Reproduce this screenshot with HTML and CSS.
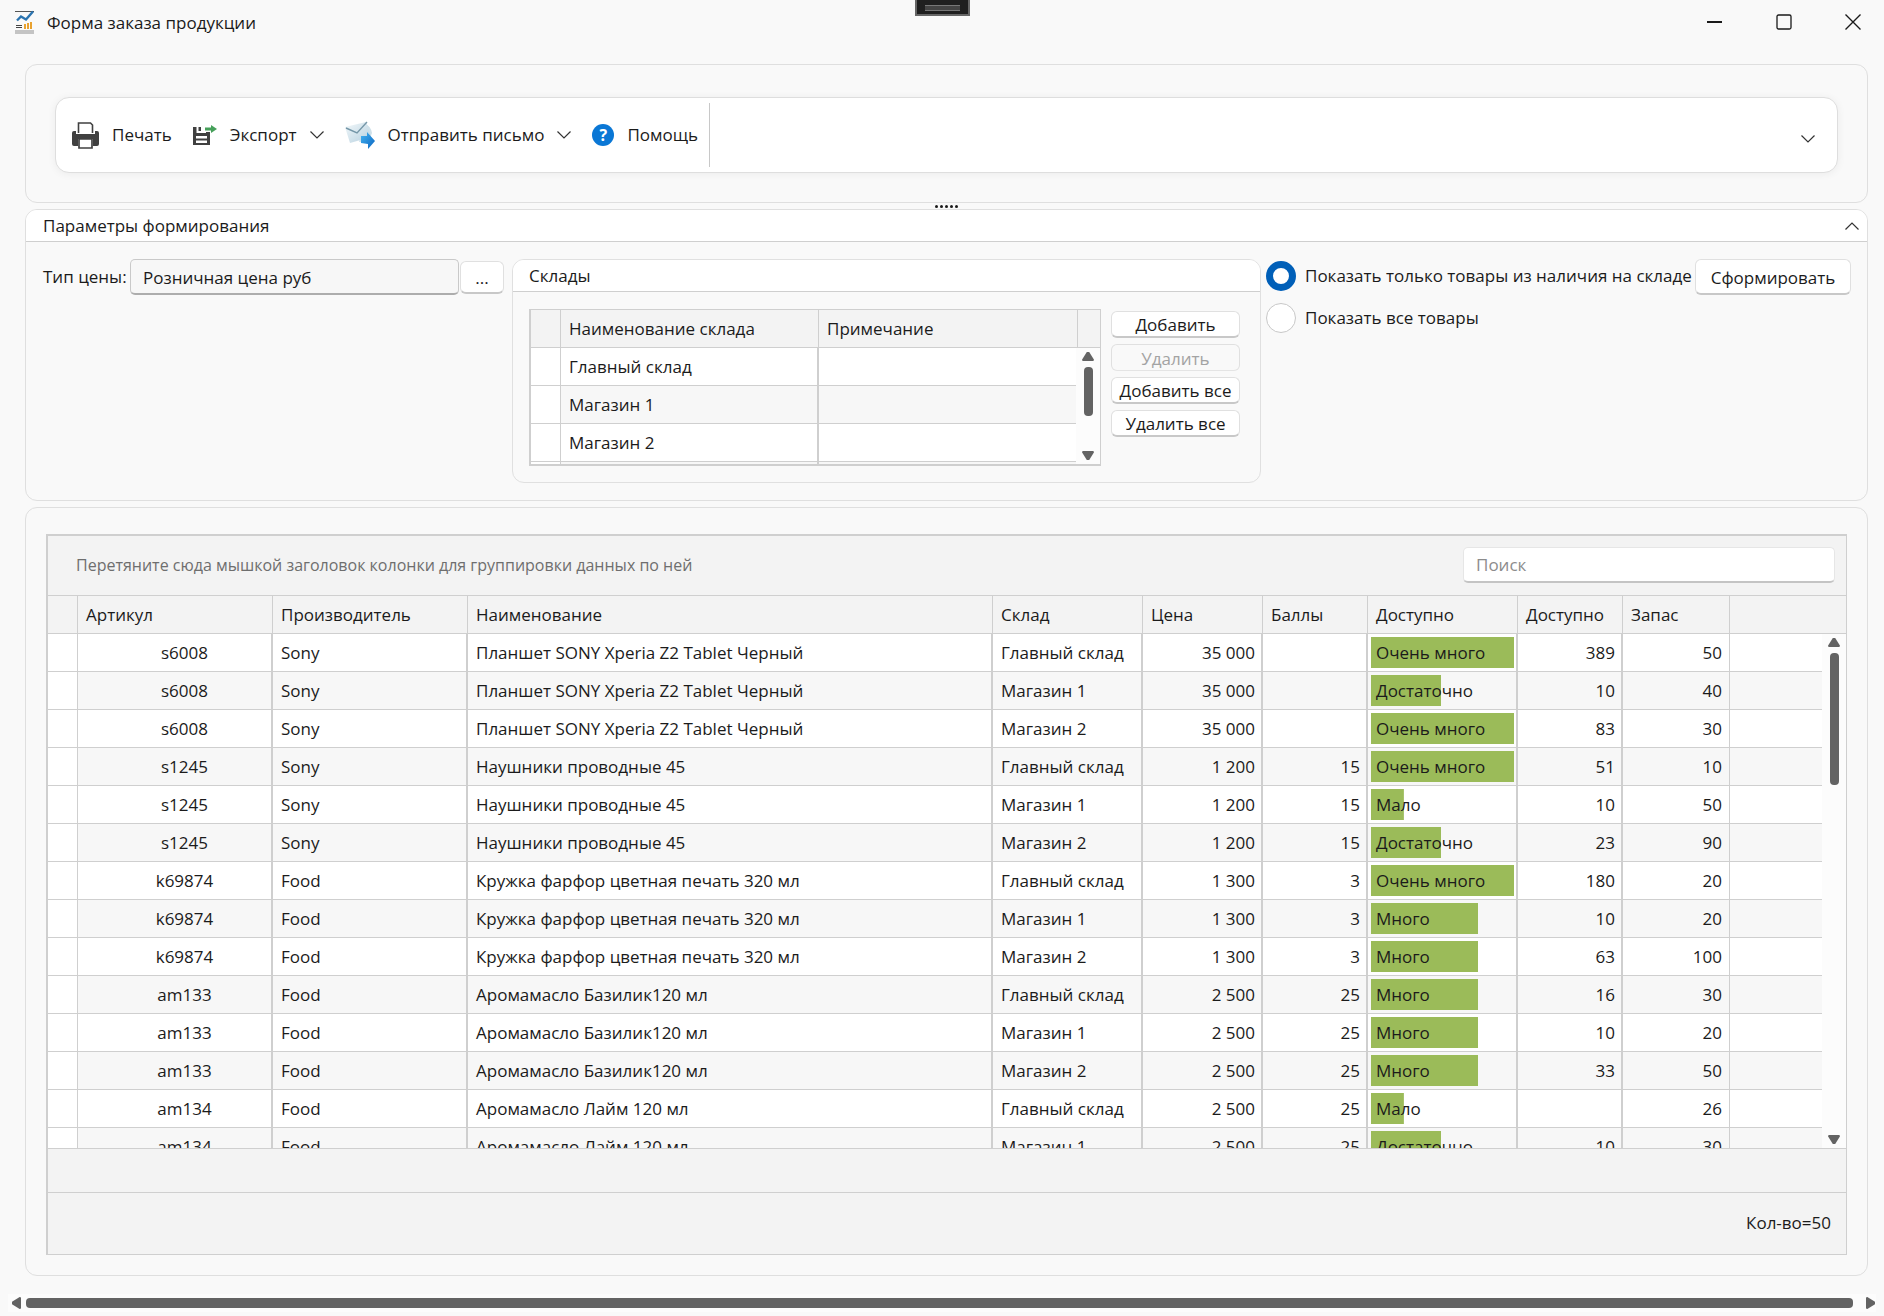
FILE: index.html
```
<!DOCTYPE html>
<html lang="ru">
<head>
    <meta charset="UTF-8">
    <meta name="viewport" content="width=device-width, initial-scale=1.0">
    <title>Форма заказа продукции</title>
    <link rel="stylesheet" href="styles.css">
</head>
<body>
    <header class="titlebar">
        <svg class="app-icon" width="20" height="24" viewBox="0 0 20 24">
            <path d="M0 1.500h19" stroke="#555" stroke-width="1"/>
            <path d="M2 10.500l4-4 5 3 7-8" fill="none" stroke="#2b74b0" stroke-width="2.400"/>
            <path d="M1 15.500h6M1 17.500h6" stroke="#444" stroke-width="1"/>
            <path d="M9 14h2v5H9zM12 13h2v6h-2zM15 12h2v7h-2z" fill="#e8a230"/>
            <path d="M0 20h19v4H0z" fill="#c4c4c4"/>
        </svg>
        <h1>Форма заказа продукции</h1>
        <div class="window-buttons">
            <button type="button" aria-label="Свернуть"><svg width="16" height="16" viewBox="0 0 16 16"><path d="M0 8h15" stroke="#1a1a1a" stroke-width="2"/></svg></button>
            <button type="button" aria-label="Развернуть"><svg width="16" height="16" viewBox="0 0 16 16"><rect x="1" y="1" width="14" height="14" rx="1.500" fill="none" stroke="#1a1a1a" stroke-width="1.300"/></svg></button>
            <button type="button" aria-label="Закрыть"><svg width="16" height="16" viewBox="0 0 16 16"><path d="M.5.500l15 15M15.500.500l-15 15" stroke="#1a1a1a" stroke-width="1.400"/></svg></button>
        </div>
        <div class="notch"></div>
    </header>

    <main>
        <section class="panel toolbar-panel">
            <div class="toolbar">
                <button type="button" class="tool">
                    <svg width="27" height="27" viewBox="0 0 27 27">
                        <path d="M6.500 11V1h12l2 2v8" fill="#fff" stroke="#404040" stroke-width="1.600"/>
                        <path d="M0 11q0-2 2-2h2v3h19V9h2q2 0 2 2v11q0 2-2 2h-4v-7H6v7H2q-2 0-2-2z" fill="#404040"/>
                        <path d="M7 17h13v9H7z" fill="#fff" stroke="#404040" stroke-width="1.700"/>
                    </svg>
                    Печать
                </button>
                <button type="button" class="tool">
                    <svg width="24" height="20" viewBox="0 0 24 20">
                        <path d="M0 2h3.500v6H13V7h4v13H0z" fill="#404040"/>
                        <path d="M5.500 2H8v4H5.500z" fill="#404040"/>
                        <path d="M3 11h11v2.500H3zM3 15.500h11V18H3z" fill="#fff"/>
                        <path d="M12 2.500h6V0l6 4-6 4V5.500h-6z" fill="#46a05a"/>
                    </svg>
                    Экспорт
                    <svg class="chevron" width="14" height="8" viewBox="0 0 14 8"><path d="M.5.500L7 7 13.500.500"/></svg>
                </button>
                <button type="button" class="tool">
                    <svg width="30" height="29" viewBox="0 0 30 29">
                        <defs>
                            <linearGradient id="paper" x1="0" y1="0" x2="1" y2="1"><stop offset="0" stop-color="#f4f9fb"/><stop offset="1" stop-color="#b4cfde"/></linearGradient>
                            <linearGradient id="arrow" x1="0" y1="0" x2="1" y2="1"><stop offset="0" stop-color="#45b4f2"/><stop offset="1" stop-color="#0a64c0"/></linearGradient>
                        </defs>
                        <path d="M19 2q7 3 8 10l-3 8-10 1z" fill="#cfe1ea"/>
                        <path d="M0 6l21-5 5 15-21 6z" fill="url(#paper)"/>
                        <path d="M1 7l11 5L22 1" fill="none" stroke="#7597a8" stroke-width="1.400"/>
                        <path d="M16 15h6v-4l8 9-7 8v-5l-7-1z" fill="url(#arrow)"/>
                    </svg>
                    Отправить письмо
                    <svg class="chevron" width="14" height="8" viewBox="0 0 14 8"><path d="M.5.500L7 7 13.500.500"/></svg>
                </button>
                <button type="button" class="tool">
                    <span class="help-icon">?</span>
                    Помощь
                </button>
                <span class="separator"></span>
                <button type="button" class="toolbar-more" aria-label="Ещё">
                    <svg class="chevron" width="14" height="8" viewBox="0 0 14 8"><path d="M.5.500L7 7 13.500.500"/></svg>
                </button>
            </div>
        </section>

        <div class="splitter"><i></i><i></i><i></i><i></i><i></i></div>

        <section class="panel">
            <div class="panel-header">
                <h2>Параметры формирования</h2>
                <button type="button" aria-label="Скрыть параметры">
                    <svg class="chevron" width="14" height="8" viewBox="0 0 14 8"><path d="M.5 7.500L7 1l6.500 6.500"/></svg>
                </button>
            </div>
            <div class="params">
                <div class="price-type">
                    <label for="priceType">Тип цены:</label>
                    <input id="priceType" type="text" value="Розничная цена руб" readonly>
                    <button type="button" class="btn btn-dots">...</button>
                </div>
                <div class="group">
                    <div class="panel-header">
                        <h2>Склады</h2>
                    </div>
                    <div class="group-body">
                        <div class="grid-view store-grid">
                            <table>
                                <colgroup>
                                    <col class="w-mark"><col class="w-store"><col class="w-note"><col>
                                </colgroup>
                                <thead>
                                    <tr><th></th><th>Наименование склада</th><th>Примечание</th><th></th></tr>
                                </thead>
                                <tbody>
                                    <tr><td></td><td>Главный склад</td><td></td><td></td></tr>
                                    <tr><td></td><td>Магазин 1</td><td></td><td></td></tr>
                                    <tr><td></td><td>Магазин 2</td><td></td><td></td></tr>
                                    <tr><td></td><td></td><td></td><td></td></tr>
                                </tbody>
                            </table>
                            <div class="vscroll">
                                <span class="arrow-up"></span>
                                <span class="thumb"></span>
                                <span class="arrow-down"></span>
                            </div>
                        </div>
                        <div class="group-buttons">
                            <button type="button" class="btn">Добавить</button>
                            <button type="button" class="btn" disabled>Удалить</button>
                            <button type="button" class="btn">Добавить все</button>
                            <button type="button" class="btn">Удалить все</button>
                        </div>
                    </div>
                </div>
                <div class="show-mode">
                    <label><input type="radio" name="mode" checked>Показать только товары из наличия на складе</label>
                    <label><input type="radio" name="mode">Показать все товары</label>
                </div>
                <button type="button" class="btn btn-build">Сформировать</button>
            </div>
        </section>

        <section class="panel data-panel">
            <div class="data-grid">
                <div class="group-row">
                    <span>Перетяните сюда мышкой заголовок колонки для группировки данных по ней</span>
                    <input type="text" placeholder="Поиск" aria-label="Поиск">
                </div>
                <div class="grid-view order-grid">
                    <table id="orderTable">
                        <colgroup>
                            <col class="w-mark"><col class="w-code"><col class="w-code"><col class="w-name"><col class="w-shop"><col class="w-price"><col class="w-num"><col class="w-shop"><col class="w-num"><col class="w-stock"><col>
                        </colgroup>
                        <thead>
                            <tr>
                                <th></th>
                                <th>Артикул</th>
                                <th>Производитель</th>
                                <th>Наименование</th>
                                <th>Склад</th>
                                <th>Цена</th>
                                <th>Баллы</th>
                                <th>Доступно</th>
                                <th>Доступно</th>
                                <th>Запас</th>
                                <th></th>
                            </tr>
                        </thead>
                        <tbody>
                        </tbody>
                    </table>
                    <div class="vscroll">
                        <span class="arrow-up"></span>
                        <span class="thumb"></span>
                        <span class="arrow-down"></span>
                    </div>
                </div>
                <div class="footer-row"></div>
                <div class="total-row">Кол-во=50</div>
            </div>
        </section>
    </main>

    <div class="hscroll">
        <span class="arrow-left"></span>
        <span class="thumb"></span>
        <span class="arrow-right"></span>
    </div>

    <script>
        // bar length in percent for each stock level
        const levels = {
            'Очень много': 100,
            'Много': 75,
            'Достаточно': 49,
            'Мало': 23
        };

        const tablet = ['s6008', 'Sony', 'Планшет SONY Xperia Z2 Tablet Черный'];
        const phones = ['s1245', 'Sony', 'Наушники проводные 45'];
        const mug = ['k69874', 'Food', 'Кружка фарфор цветная печать 320 мл'];
        const basil = ['am133', 'Food', 'Аромамасло Базилик120 мл'];
        const lime = ['am134', 'Food', 'Аромамасло Лайм 120 мл'];

        const rows = [
            [...tablet, 'Главный склад', '35 000', '', 'Очень много', 389, 50],
            [...tablet, 'Магазин 1', '35 000', '', 'Достаточно', 10, 40],
            [...tablet, 'Магазин 2', '35 000', '', 'Очень много', 83, 30],
            [...phones, 'Главный склад', '1 200', 15, 'Очень много', 51, 10],
            [...phones, 'Магазин 1', '1 200', 15, 'Мало', 10, 50],
            [...phones, 'Магазин 2', '1 200', 15, 'Достаточно', 23, 90],
            [...mug, 'Главный склад', '1 300', 3, 'Очень много', 180, 20],
            [...mug, 'Магазин 1', '1 300', 3, 'Много', 10, 20],
            [...mug, 'Магазин 2', '1 300', 3, 'Много', 63, 100],
            [...basil, 'Главный склад', '2 500', 25, 'Много', 16, 30],
            [...basil, 'Магазин 1', '2 500', 25, 'Много', 10, 20],
            [...basil, 'Магазин 2', '2 500', 25, 'Много', 33, 50],
            [...lime, 'Главный склад', '2 500', 25, 'Мало', '', 26],
            [...lime, 'Магазин 1', '2 500', 25, 'Достаточно', 10, 30]
        ];

        const tableBody = document.querySelector('#orderTable tbody');
        rows.forEach(r => {
            const row = document.createElement('tr');
            row.innerHTML = `
                <td></td>
                <td class="code">${r[0]}</td>
                <td>${r[1]}</td>
                <td>${r[2]}</td>
                <td>${r[3]}</td>
                <td class="num">${r[4]}</td>
                <td class="num">${r[5]}</td>
                <td class="level"><div style="background-size: ${levels[r[6]]}% 100%">${r[6]}</div></td>
                <td class="num">${r[7]}</td>
                <td class="num stock">${r[8]}</td>
                <td></td>
            `;
            tableBody.appendChild(row);
        });
    </script>
</body>
</html>
```
FILE: styles.css
```
* {
    box-sizing: border-box;
}
body {
    margin: 0;
    height: 100vh;
    display: flex;
    flex-direction: column;
    background-color: #f9f9f9;
    color: #1b1b1b;
    font-family: "Open Sans", "Noto Sans", sans-serif;
    font-size: 17px;
    line-height: 24px;
    overflow: hidden;
}
button, input {
    font: inherit;
    color: inherit;
}
button {
    border: 0;
    padding: 0;
    background: none;
}
h1, h2 {
    margin: 0;
    font-size: 17px;
    font-weight: 400;
}
svg {
    display: block;
}

/* title bar */
.titlebar {
    position: relative;
    display: flex;
    align-items: center;
    flex: none;
    height: 44px;
    padding: 0 23px 0 15px;
}
.titlebar h1 {
    margin-left: 12px;
    padding-top: 1px;
}
.window-buttons {
    display: flex;
    gap: 53px;
    margin-left: auto;
}
.notch {
    position: absolute;
    top: -2px;
    left: calc(50% - 27px);
    width: 55px;
    height: 18px;
    border: 2px solid #666;
    background-color: #1f1f1f;
}
.notch::after {
    content: "";
    display: block;
    height: 4px;
    margin: 5px 8px;
    border-top: 1px solid #777;
    border-bottom: 1px solid #777;
    background-color: #444;
}

main {
    display: flex;
    flex-direction: column;
    flex: 1;
    min-height: 0;
    padding: 20px 16px 0 25px;
}
.panel {
    border: 1px solid #dfdfdf;
    border-radius: 12px;
}

/* toolbar */
.toolbar-panel {
    padding: 32px 29px 29px;
}
.toolbar {
    display: flex;
    align-items: center;
    height: 76px;
    padding: 0 22px 0 16px;
    border: 1px solid #dedede;
    border-radius: 14px;
    background-color: #fff;
    box-shadow: 0 1px 8px rgba(0, 0, 0, 0.06);
}
.tool {
    display: flex;
    align-items: center;
    gap: 13px;
    margin-right: 21px;
}
.chevron path {
    fill: none;
    stroke: #333;
    stroke-width: 1.2;
}
.help-icon {
    width: 22px;
    height: 22px;
    border-radius: 50%;
    background-color: #0a77d5;
    color: #fff;
    font-size: 16px;
    font-weight: 700;
    line-height: 22px;
}
.separator {
    width: 1px;
    height: 64px;
    margin-left: -10px;
    background-color: #c8c8c8;
}
.toolbar-more {
    margin-left: auto;
    padding-top: 8px;
}

.splitter {
    display: flex;
    justify-content: center;
    align-items: center;
    gap: 2px;
    height: 6px;
}
.splitter i {
    width: 3px;
    height: 3px;
    border-radius: 50%;
    background-color: #1a1a1a;
}

/* parameters */
.panel-header {
    display: flex;
    justify-content: space-between;
    align-items: center;
    height: 32px;
    padding: 0 8px 0 17px;
    border-bottom: 1px solid #cfcfcf;
    border-radius: 11px 11px 0 0;
    background-color: #fff;
}
.params {
    display: flex;
    align-items: flex-start;
    padding: 17px 16px 17px 17px;
}
.price-type {
    display: flex;
    align-items: center;
    flex: none;
}
.price-type label {
    width: 87px;
    white-space: nowrap;
}
.price-type input {
    width: 329px;
    height: 36px;
    padding: 1px 12px 0;
    border: 1px solid #c9c9c9;
    border-bottom: 2px solid #adadad;
    border-radius: 5px;
    background-color: #f7f7f7;
}
.btn {
    height: 27px;
    padding-top: 1px;
    border: 1px solid #e0e0e0;
    border-bottom: 2px solid #c8c8c8;
    border-radius: 6px;
    background-color: #fff;
    line-height: 23px;
}
.btn:disabled {
    border-bottom: 1px solid #e4e4e4;
    background-color: #f9f9f9;
    color: #a3a3a3;
}
.btn-dots {
    width: 44px;
    height: 33px;
    margin-left: 1px;
}
.btn-build {
    width: 156px;
    height: 36px;
    margin-left: auto;
}
.group {
    width: 749px;
    margin-left: 8px;
    border: 1px solid #e0e0e0;
    border-radius: 12px;
}
.group .panel-header {
    padding-left: 16px;
}
.group-body {
    display: flex;
    gap: 10px;
    padding: 17px 20px 16px 16px;
}
.group-buttons {
    display: flex;
    flex-direction: column;
    flex: 1;
    gap: 6px;
    padding-top: 2px;
}
.show-mode {
    display: flex;
    flex-direction: column;
    gap: 12px;
    margin-left: 5px;
    padding-top: 2px;
}
.show-mode label {
    display: flex;
    align-items: center;
    gap: 9px;
    white-space: nowrap;
}
.show-mode input {
    appearance: none;
    width: 30px;
    height: 30px;
    margin: 0;
    border: 1px solid #c8c8c8;
    border-radius: 50%;
    background-color: #fff;
}
.show-mode input:checked {
    border: 7px solid #005fb8;
}

/* grids */
.grid-view {
    position: relative;
    overflow: hidden;
}
table {
    width: 100%;
    table-layout: fixed;
    border-collapse: separate;
    border-spacing: 0;
}
th, td {
    height: 38px;
    padding: 0 6px 0 8px;
    border-right: 1px solid #cfcfcf;
    border-bottom: 1px solid #cfcfcf;
    font-weight: 400;
    text-align: left;
    white-space: nowrap;
}
th {
    background-color: #f3f3f3;
}
td {
    border-right-width: 2px;
    background-color: #fff;
}
tbody tr:nth-child(even) td {
    background-color: #f7f7f7;
}
tbody td:first-child, tbody tr:nth-child(even) td:first-child {
    border-right-width: 1px;
    background-color: #fff;
}
th:last-child, td:last-child {
    border-right: 0;
}
td.code {
    padding-left: 26px;
    text-align: center;
}
td.num {
    text-align: right;
}
td.stock {
    padding-right: 7px;
    border-right-width: 1px;
}
td.level {
    padding: 3px 2px 3px 3px;
}
td.level div {
    height: 31px;
    padding-left: 5px;
    background-image: linear-gradient(#9bbb59, #9bbb59);
    background-repeat: no-repeat;
    line-height: 31px;
}
.w-mark { width: 30px; }
.w-store { width: 258px; }
.w-note { width: 259px; }
.w-code { width: 195px; }
.w-name { width: 525px; }
.w-shop { width: 150px; }
.w-price { width: 120px; }
.w-num { width: 105px; }
.w-stock { width: 107px; }

.store-grid {
    width: 572px;
    height: 157px;
    border: 1px solid #cfcfcf;
    border-left-width: 2px;
    border-bottom-width: 2px;
}
.data-panel {
    display: flex;
    flex: 1;
    min-height: 0;
    margin-top: 6px;
    padding: 26px 20px 20px;
}
.data-grid {
    display: flex;
    flex-direction: column;
    flex: 1;
    border: 1px solid #cfcfcf;
    border-top-width: 2px;
    border-left-width: 2px;
    background-color: #f3f3f3;
}
.order-grid {
    flex: 1;
}
.group-row {
    display: flex;
    justify-content: space-between;
    align-items: center;
    height: 60px;
    padding: 0 11px 1px 28px;
    border-bottom: 1px solid #cfcfcf;
    color: #6e6e6e;
    font-size: 16px;
}
.group-row input {
    width: 372px;
    height: 36px;
    padding: 0 12px;
    border: 1px solid #e6e6e6;
    border-bottom: 2px solid #c4c4c4;
    border-radius: 5px;
    background-color: #fff;
    font-size: 17px;
}
.group-row input::placeholder {
    color: #8c8c8c;
}
.footer-row {
    height: 45px;
    border-top: 1px solid #cfcfcf;
    border-bottom: 1px solid #cfcfcf;
}
.total-row {
    height: 61px;
    padding-right: 15px;
    line-height: 60px;
    text-align: right;
}

/* scrollbars */
.vscroll {
    position: absolute;
    top: 38px;
    right: 0;
    bottom: 0;
    display: flex;
    flex-direction: column;
    align-items: center;
    width: 24px;
    padding: 4px 0;
    background-color: #fcfcfc;
}
.vscroll .thumb {
    width: 9px;
    height: 132px;
    margin: 6px 0 auto;
    border-radius: 4px;
    background-color: #636363;
}
.store-grid .thumb {
    height: 49px;
}
.arrow-up, .arrow-down {
    width: 12px;
    height: 9px;
    background-color: #636363;
}
.arrow-up {
    clip-path: polygon(40% 0, 60% 0, 100% 85%, 95% 100%, 5% 100%, 0 85%);
}
.arrow-down {
    clip-path: polygon(5% 0, 95% 0, 100% 15%, 60% 100%, 40% 100%, 0 15%);
}
.hscroll {
    display: flex;
    align-items: center;
    flex: none;
    gap: 5px;
    height: 18px;
    margin: 18px 8px 4px;
    padding: 0 1px 0 4px;
    background-color: #fcfcfc;
}
.hscroll .thumb {
    flex: 1;
    height: 10px;
    margin-right: 8px;
    border-radius: 4px;
    background-color: #636363;
}
.arrow-left, .arrow-right {
    width: 9px;
    height: 12px;
    background-color: #636363;
}
.arrow-left {
    clip-path: polygon(0 40%, 85% 0, 100% 5%, 100% 95%, 85% 100%, 0 60%);
}
.arrow-right {
    clip-path: polygon(0 5%, 15% 0, 100% 40%, 100% 60%, 15% 100%, 0 95%);
}
```
